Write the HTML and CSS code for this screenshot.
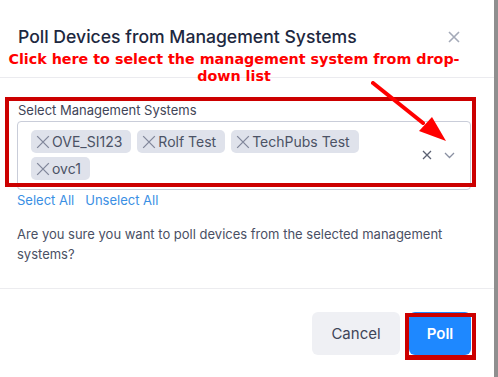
FILE: index.html
```html
<!DOCTYPE html>
<html lang="en">
<head>
  <meta charset="UTF-8" />
  <title>Poll Devices from Management Systems</title>
  <link rel="stylesheet" href="styles.css">
</head>
<body>
  <div class="screen">
    <div class="modal">
      <div class="modal-header">
        <h2>Poll Devices from Management Systems</h2>
        <button class="close-btn" aria-label="Close">
          <svg width="12" height="12" viewBox="0 0 12 12"><path d="M1 1L11 11M11 1L1 11" stroke="#a4aab8" stroke-width="1.6"/></svg>
        </button>
      </div>

      <div class="modal-body">
        <label class="field-label">Select Management Systems</label>
        <div class="select-box">
          <div class="tags">
            <span class="tag"><svg viewBox="0 0 12 12"><path d="M1 1L11 11M11 1L1 11"/></svg>OVE_SI123</span>
            <span class="tag"><svg viewBox="0 0 12 12"><path d="M1 1L11 11M11 1L1 11"/></svg>Rolf Test</span>
            <span class="tag"><svg viewBox="0 0 12 12"><path d="M1 1L11 11M11 1L1 11"/></svg>TechPubs Test</span>
            <span class="tag"><svg viewBox="0 0 12 12"><path d="M1 1L11 11M11 1L1 11"/></svg>ovc1</span>
          </div>
          <div class="indicators">
            <svg class="clear-icon" width="10" height="10" viewBox="0 0 10 10"><path d="M1 1L9 9M9 1L1 9" stroke="#5b6172" stroke-width="1.3"/></svg>
            <svg class="chevron" width="11" height="7" viewBox="0 0 11 7"><path d="M1 1L5.5 5.5L10 1" fill="none" stroke="#8a90a2" stroke-width="1.3"/></svg>
          </div>
        </div>
        <div class="links">
          <a href="#">Select All</a>
          <a href="#">Unselect All</a>
        </div>
        <p class="question">Are you sure you want to poll devices from the selected management systems?</p>
      </div>

      <div class="modal-footer">
        <button class="btn btn-cancel">Cancel</button>
        <button class="btn btn-poll">Poll</button>
        <div class="mark mark-poll"></div>
      </div>

      <!-- annotations drawn over the dialog -->
      <div class="note">Click here to select the management system from drop-<br>down list</div>
      <div class="mark mark-select"></div>
      <svg class="arrow" width="80" height="64" viewBox="0 0 80 64">
        <path d="M2 2L52 42" stroke="#ff0000" stroke-width="4" stroke-linecap="round"/>
        <path d="M48 50L61 36L75 60Z" fill="#ff0000"/>
      </svg>
    </div>
    <div class="backdrop"></div>
  </div>
</body>
</html>
```

FILE: styles.css
```css
* {
  box-sizing: border-box;
}

body {
  margin: 0;
  font-family: 'Inter', 'Liberation Sans', sans-serif;
  background: #fff;
}

.screen {
  display: flex;
  width: 498px;
  height: 377px;
  overflow: hidden;
}

.modal {
  position: relative;
  width: 494px;
  height: 376px;
  background: #fff;
  border-radius: 0 0 6px 0;
  display: flex;
  flex-direction: column;
}

.backdrop {
  flex: 1;
  background: #8f8f8f;
}

.modal-header {
  height: 78px;
  border-bottom: 1px solid #ebebef;
  display: flex;
  justify-content: space-between;
  align-items: flex-start;
  padding: 26px 34px 0 18px;
}

.modal-header h2 {
  margin: 0;
  font-size: 17.6px;
  font-weight: 500;
  color: #1d2840;
  line-height: 22px;
}

.close-btn {
  background: none;
  border: none;
  padding: 0;
  margin-top: 5px;
  cursor: pointer;
}

.modal-body {
  padding: 24px 22px 0 17px;
  height: 211px;
  border-bottom: 1px solid #ececef;
}

.field-label {
  display: block;
  font-size: 13px;
  line-height: 16px;
  color: #3f4558;
  margin: 0 0 3px 1px;
}

.select-box {
  display: flex;
  align-items: center;
  border: 1px solid #c9cdd9;
  border-radius: 4px;
  padding: 8px 0 9px 13px;
  width: 454px;
}

.tags {
  width: 375px;
  display: flex;
  flex-wrap: wrap;
  gap: 4px 6px;
}

.tag {
  display: inline-flex;
  align-items: center;
  height: 23px;
  padding: 0 9px 0 5px;
  background: #dfe2eb;
  border-radius: 5px;
  font-size: 14px;
  color: #4b5265;
}

.tag svg {
  width: 14px;
  height: 14px;
  margin-right: 2px;
  stroke: #80869a;
  stroke-width: 1.1;
}

.indicators {
  display: flex;
  align-items: center;
  gap: 12px;
  margin-left: 16px;
}

.links {
  display: flex;
  gap: 11px;
  margin: 2px 0 0 0;
  font-size: 13px;
  line-height: 17px;
}

.links a {
  color: #3a8fe4;
  text-decoration: none;
}

.question {
  margin: 15px 0 0 0;
  font-size: 13px;
  line-height: 20px;
  color: #4a5064;
}

.modal-footer {
  position: relative;
  display: flex;
  justify-content: flex-end;
  gap: 9px;
  padding: 23px 23px 0 0;
}

.btn {
  height: 43px;
  border: none;
  border-radius: 6px;
  font-family: inherit;
  font-size: 15px;
  cursor: pointer;
}

.btn-cancel {
  width: 88px;
  background: #eff0f4;
  color: #3f4558;
}

.btn-poll {
  width: 62px;
  background: #1e88ff;
  color: #fff;
  font-weight: 600;
}

.mark {
  position: absolute;
  border: 4px solid #cc0000;
}

.mark-select {
  left: 5px;
  top: 97px;
  width: 471px;
  height: 90px;
}

.mark-poll {
  right: 18px;
  top: 24px;
  width: 71px;
  height: 47px;
  border-width: 4px 4px 5px 4px;
}

.note {
  position: absolute;
  left: 0;
  top: 51px;
  width: 468px;
  text-align: center;
  font-family: 'DejaVu Sans', sans-serif;
  font-weight: bold;
  font-size: 14.3px;
  line-height: 17px;
  color: #ff0000;
}

.arrow {
  position: absolute;
  left: 371px;
  top: 81px;
}
```
